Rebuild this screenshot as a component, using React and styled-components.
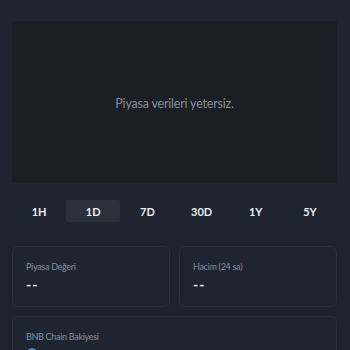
import React from 'react';
import styled, { createGlobalStyle } from 'styled-components';

const GlobalStyle = createGlobalStyle`
  html, body {
    margin: 0;
    padding: 0;
    background: #1f2530;
    font-family: 'Lato', 'Noto Sans', sans-serif;
    overflow: hidden;
  }
`;

const periods = ['1H', '1D', '7D', '30D', '1Y', '5Y'];

function App() {
  return (
    <>
      <GlobalStyle />
      <Page>
        <ChartBox>
          <EmptyText>Piyasa verileri yetersiz.</EmptyText>
        </ChartBox>
        <PeriodBar>
          {periods.map((p) => (
            <PeriodTab key={p} $active={p === '1D'}>
              {p}
            </PeriodTab>
          ))}
        </PeriodBar>
        <StatGrid>
          <StatCard>
            <StatLabel>Piyasa Değeri</StatLabel>
            <StatValue>--</StatValue>
          </StatCard>
          <StatCard>
            <StatLabel>Hacim (24 sa)</StatLabel>
            <StatValue>--</StatValue>
          </StatCard>
          <StatCard $wide>
            <StatLabel>BNB Chain Bakiyesi</StatLabel>
            <BalanceRow>
              <CoinDot />
            </BalanceRow>
          </StatCard>
        </StatGrid>
      </Page>
    </>
  );
}

export default App;

const Page = styled.div`
  padding: 21px 13px 0 12px;
`;

const ChartBox = styled.div`
  height: 162px;
  background: #1a1f26;
  display: flex;
  align-items: center;
  justify-content: center;
`;

const EmptyText = styled.span`
  color: #848e9c;
  font-size: 12.5px;
  letter-spacing: -0.2px;
  margin-top: 2px;
`;

const PeriodBar = styled.div`
  display: grid;
  grid-template-columns: repeat(6, 1fr);
  margin-top: 17px;
`;

const PeriodTab = styled.div`
  height: 22px;
  display: flex;
  align-items: center;
  justify-content: center;
  font-size: 11px;
  font-weight: 700;
  color: #eaecef;
  background: ${(p) => (p.$active ? '#2b313a' : 'transparent')};
  border-radius: 2px;
`;

const StatGrid = styled.div`
  display: grid;
  grid-template-columns: 1fr 1fr;
  gap: 9px;
  margin-top: 24px;
`;

const StatCard = styled.div`
  grid-column: ${(p) => (p.$wide ? '1 / -1' : 'auto')};
  height: 61px;
  box-sizing: border-box;
  border: 1px solid #2b3139;
  border-radius: 6px;
  padding: 14px 13px 0;
`;

const StatLabel = styled.div`
  color: #848e9c;
  font-size: 9px;
  letter-spacing: -0.3px;
  line-height: 12px;
`;

const StatValue = styled.div`
  color: #eaecef;
  font-size: 14px;
  font-weight: 700;
  line-height: 18px;
  margin-top: 3px;
  letter-spacing: 1px;
`;

const BalanceRow = styled.div`
  display: flex;
  align-items: center;
  margin-top: 5px;
`;

const CoinDot = styled.div`
  width: 12px;
  height: 12px;
  border-radius: 50%;
  background: #5b7bb8;
`;
